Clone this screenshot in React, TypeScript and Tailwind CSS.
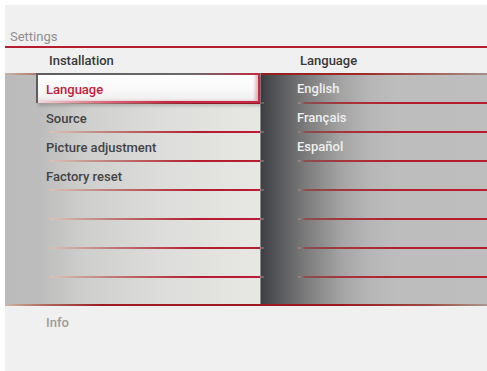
import React from "react";

const leftItems = ["Language", "Source", "Picture adjustment", "Factory reset", "", "", "", ""];
const rightItems = ["English", "Français", "Español", "", "", "", "", ""];

export default function App() {
  const font = { fontFamily: "Roboto, 'Liberation Sans', sans-serif" };
  return (
    <div className="w-[487px] h-[371px] bg-white pl-[5px] pt-[5px] overflow-hidden" style={font}>
      <div className="h-full bg-[#eff0ef] flex flex-col">
        {/* Settings title */}
        <div className="h-[41px] flex items-end pl-[5px] pb-[1px]">
          <span className="text-[13px] leading-[16px] text-[#8f8f8f]">Settings</span>
        </div>
        <div className="h-[2px] bg-[#b81c30]" />
        {/* header */}
        <div className="h-[25px] flex items-center pt-[1px]">
          <div className="w-[256px] pl-[44px] text-[13px] font-medium text-[#383838]">Installation</div>
          <div className="flex-1 pl-[39px] text-[13px] font-medium text-[#383838]">Language</div>
        </div>
        {/* main */}
        <div className="flex">
          {/* left panel */}
          <div className="relative w-[256px] border-r border-[#8a8a8a] bg-[linear-gradient(to_right,#bababa_0%,#bdbdbd_14%,#cfcfcd_32%,#dcdcda_60%,#e7e7e4_100%)]">
            <div className="h-[2px] bg-[linear-gradient(to_right,#c9b3a5,#b07a6a_12%,#9a2228_40%,#9a2228)]" />
            {leftItems.map((t, i) => (
              <div key={i} className="flex flex-col">
                <div className={`${i === 7 ? "h-[26px]" : "h-[27px]"} flex items-center pt-[3px] pl-[41px] text-[13px] font-medium text-[#444]`}>
                  {i === 0 ? "" : t}
                </div>
                {i < 7 && (
                  <div className="h-[2px] ml-[45px] bg-[linear-gradient(to_right,#d8c2b8,#c07878_30%,#b41d31_70%,#b81c30)]" />
                )}
              </div>
            ))}
            {/* highlight */}
            <div className="absolute top-0 left-[31px] w-[224px] h-[30px] pt-[2px] pl-[2px] bg-[linear-gradient(to_right,#5e5e5e,#6a6a6a_70%,#c42a43)] shadow-[2px_3px_3px_rgba(0,0,0,0.18)]">
              <div className="h-full flex flex-col border-r-2 border-[#c52a44] bg-[linear-gradient(to_bottom,#ffffff,#f7f7f7_60%,#ececec)] shadow-[inset_-3px_-2px_3px_rgba(210,60,90,0.35)]">
                <div className="flex-1 flex items-center pt-[3px] pl-[8px] text-[13px] font-medium text-[#c0213a]">Language</div>
                <div className="h-[2px] bg-[linear-gradient(to_right,#f0d8dc,#d86a7e_30%,#c52a44_60%)]" />
              </div>
            </div>
          </div>
          {/* right panel */}
          <div className="flex-1 bg-[linear-gradient(to_right,#3e3f44_0%,#58595c_8%,#7c7c7c_20%,#a3a3a3_35%,#b6b6b6_48%,#bdbdbd_60%,#bebebe_100%)]">
            <div className="h-[2px] bg-[linear-gradient(to_right,#981b20,#9e2a28_45%,#a4605a_75%,#a39088)]" />
            {rightItems.map((t, i) => (
              <div key={i} className="flex flex-col">
                <div className={`${i === 7 ? "h-[26px]" : "h-[27px]"} flex items-center pl-[36px] text-[13px] font-medium text-[#efefef]`}>
                  {t}
                </div>
                {i < 7 && (
                  <div className="h-[2px] flex">
                    <div className="w-[3px] bg-[#6a6a6a]" />
                    <div className="flex-1 ml-[34px] bg-[linear-gradient(to_right,#8f8f8f,#8a4d4d_4%,#a6343c_25%,#b51c30_55%,#b81c30)]" />
                  </div>
                )}
              </div>
            ))}
          </div>
        </div>
        <div className="h-[2px] bg-[linear-gradient(to_right,#cdb5a5,#b06a5e_8%,#9c1c20_20%,#9c1a1e_70%,#9e4a40_88%,#a89890)]" />
        {/* info */}
        <div className="pl-[41px] pt-[4px]">
          <span className="text-[13px] leading-[16px] font-medium text-[#9c9c9c]">Info</span>
        </div>
      </div>
    </div>
  );
}
